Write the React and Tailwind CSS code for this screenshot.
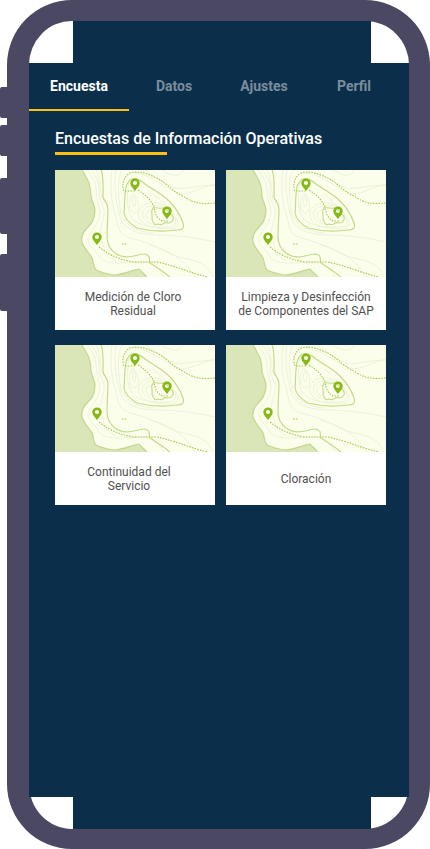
import React from "react";

const tabs = ["Encuesta", "Datos", "Ajustes", "Perfil"];

const surveys = [
  { lines: ["Medición de Cloro", "Residual"], pad: "pl-2 pr-3" },
  { lines: ["Limpieza y Desinfección", "de Componentes del SAP"], pad: "px-2" },
  { lines: ["Continuidad del", "Servicio"], pad: "pr-3" },
  { lines: ["Cloración"], pad: "px-2" },
];

function Pin({ x, y }) {
  return (
    <path
      transform={`translate(${x} ${y})`}
      fill="#86b817"
      fillRule="evenodd"
      d="M0 0C-1.5-2.2-4.7-5-4.7-8A4.7 4.6 0 0 1 4.7-8C4.7-5 1.5-2.2 0 0ZM0-10.1A2.1 2.1 0 1 0 0-5.9 2.1 2.1 0 1 0 0-10.1Z"
    />
  );
}

function TopoMap() {
  return (
    <svg viewBox="0 0 160 107" className="block w-full" aria-hidden="true">
      <rect width="160" height="107" fill="#fafeeb" />
      <path
        d="M-2-2H26L31 7C35 13 36 20 36 26C37 33 40 35 40 40C40 50 36 54 33 57C28 62 26 67 27 72C29 79 35 84 37 88C39 93 38 97 41 100C47 103 52 104 58 105C68 105 74 101 84 99C87 103 90 104 93 109H-2Z"
        fill="#dae5b8"
        stroke="#c3d78c"
        strokeWidth="1.2"
      />
      <g fill="none" stroke="#ebf1d6" strokeWidth="0.9">
        <path d="M32 0C37 6 41 12 41 20C41 28 44 35 45 42C45 55 33 62 33 69C33 77 41 79 44 87C50 95 65 93 90 92C101 93 105 101 109 107" />
        <path d="M36 0C43 7 45 17 44 24C44 32 51 38 49 45C47 56 43 62 46 69C50 76 48 86 61 91" />
        <path d="M41 0C46 9 45 21 47 28" />
        <path d="M57 0C55 15 56 33 60 43C64 56 61 65 79 69C95 73 105 79 118 85C133 91 150 88 158 107" />
        <path d="M61 0C58 16 62 36 65 47C70 62 86 65 107 65C128 66 142 68 160 72" />
        <path d="M67 0C61 9 64 34 66 44C71 57 84 62 98 63" />
        <path d="M74 12C72 22 71 40 77 48C84 57 99 57 113 59C123 60 125 52 121 48C115 38 107 31 98 24" />
        <path d="M78 23C72 30 74 43 80 43C86 40 84 28 78 23Z" />
        <path d="M79 25C77 29 77 35 79 37C82 35 81 28 79 25Z" />
        <path d="M97 57C84 54 80 43 87 37C94 30 108 32 116 41C122 48 123 55 116 57Z" />
        <path d="M97 54C87 51 84 43 92 37C98 35 106 34 113 40" />
        <path d="M95 51C87 46 92 40 97 40" />
        <path d="M91 0C99 8 113 15 120 18C134 20 142 14 160 16" />
        <path d="M79 3C95 4 110 18 123 23C135 26 145 17 160 14" />
        <path d="M107 0C113 4 120 7 125 4C127 3 128 1 128-1" />
        <path d="M95 75C117 81 127 90 135 99L140 107" />
      </g>
      <g fill="none" stroke="#c5da8c" strokeWidth="1.2">
        <path d="M46-1C49 9 48 19 48 27C49 31 53 33 53 39L52 65C52 74 54 78 60 83C71 91 82 84 90 84C97 86 93 90 95 93C103 98 109 102 116 108" />
        <path d="M75 10C79 6 87 11 90 14C100 21 108 25 114 31C122 39 126 47 128 53C130 59 126 60 122 60C108 62 94 61 82 58C75 54 70 49 69 43C70 33 69 21 72 14Z" />
        <path d="M98 38C102 37 105 39 108 38C114 39 114 44 117 45C120 49 117 53 113 53C108 51 108 57 103 54C99 56 98 52 97 49C98 45 95 42 98 38Z" />
      </g>
      <g fill="none" stroke="#a8c950" strokeWidth="1.1" strokeDasharray="1.6 1.2">
        <path d="M80 21H69C66 15 69 6 75 3C86 0 94 5 102 8C113 14 118 22 128 26C139 34 147 34 160 33" />
        <path d="M83 20C91 25 96 30 99 37C100 44 102 48 107 51H114" />
        <path d="M44 77C53 84 62 89 78 92C88 92 94 92 102 92C121 96 135 103 153 107" />
        <path d="M67 74H72" />
      </g>
      <Pin x={80} y={21} />
      <Pin x={112} y={49} />
      <Pin x={42} y={75} />
    </svg>
  );
}

function SurveyCard({ lines, pad }) {
  return (
    <button type="button" className="flex w-full flex-col bg-white text-center">
      <span className="block w-full">
        <TopoMap />
      </span>
      <span
        className={`flex h-[53px] w-full flex-col items-center justify-center text-xs leading-[14px] text-[#505050] ${pad}`}
      >
        {lines.map((line) => (
          <span key={line} className="whitespace-nowrap">
            {line}
          </span>
        ))}
      </span>
    </button>
  );
}

function SideButtons() {
  return (
    <div className="flex w-[7px] shrink-0 flex-col pt-[87px]" aria-hidden="true">
      <div className="h-[31px] rounded-l-xs bg-[#4a4863]" />
      <div className="mt-[7px] h-[31px] rounded-l-xs bg-[#4a4863]" />
      <div className="mt-[22px] h-14 rounded-l-xs bg-[#4a4863]" />
      <div className="mt-5 h-[57px] rounded-l-xs bg-[#4a4863]" />
    </div>
  );
}

export default function App() {
  return (
    <div className="flex min-h-screen bg-white font-['Roboto',sans-serif]">
      <SideButtons />
      <div className="flex min-w-0 flex-1 flex-col rounded-[65px] border-t-[21px] border-r-[21px] border-b-[20px] border-l-[22px] border-[#4a4863] bg-white">
        <div className="mr-[38px] ml-11 h-[42px] bg-[#0b2f4b]" />
        <div className="flex-1 bg-[#0b2f4b]">
          <nav className="flex" role="tablist">
            {tabs.map((tab, i) => (
              <button
                key={tab}
                type="button"
                role="tab"
                aria-selected={i === 0}
                className={`h-12 min-w-[90px] border-b-2 text-sm font-bold ${
                  i === 0
                    ? "w-[100px] border-[#fdbf12] text-white"
                    : "border-transparent text-[#7b8d9c]"
                }`}
              >
                {tab}
              </button>
            ))}
          </nav>
          <main className="pr-[23px] pl-[26px]">
            <h1 className="pt-[17px] text-base leading-[22px] font-medium text-white">
              Encuestas de Información Operativas
            </h1>
            <div className="mt-[2px] h-[3px] w-28 bg-[#fdbf12]" />
            <div className="mt-[15px] grid grid-cols-2 gap-x-[11px] gap-y-[15px]">
              {surveys.map((survey) => (
                <SurveyCard key={survey.lines[0]} {...survey} />
              ))}
            </div>
          </main>
        </div>
        <div className="mr-[38px] ml-11 h-8 bg-[#0b2f4b]" />
      </div>
    </div>
  );
}
